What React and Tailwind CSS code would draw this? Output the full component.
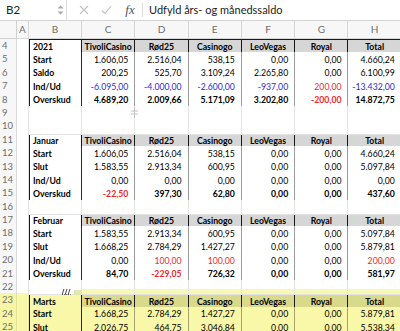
import React from 'react';

const GRID = 'grid grid-cols-[17px_12px_53px_53.3px_53.3px_53.3px_53.3px_53.3px_53.3px]';

const R = (v) => ({ v, c: 'r' });
const B = (v) => ({ v, c: 'b' });

const rows = [
  { n: 4, t: 'head', label: '2021' },
  { n: 5, t: 'body', label: 'Start', vals: ['1.606,05', '2.516,04', '538,15', '0,00', '0,00', '4.660,24'] },
  { n: 6, t: 'body', label: 'Saldo', vals: ['200,25', '525,70', '3.109,24', '2.265,80', '0,00', '6.100,99'] },
  { n: 7, t: 'body', sep: true, label: 'Ind/Ud', vals: [B('-6.095,00'), B('-4.000,00'), B('-2.600,00'), B('-937,00'), R('200,00'), B('-13.432,00')] },
  { n: 8, t: 'last', label: 'Overskud', vals: ['4.689,20', '2.009,66', '5.171,09', '3.202,80', R('-200,00'), '14.872,75'] },
  { n: 9, t: 'empty', cursor: true },
  { n: 10, t: 'empty' },
  { n: 11, t: 'head', label: 'Januar' },
  { n: 12, t: 'body', label: 'Start', vals: ['1.606,05', '2.516,04', '538,15', '0,00', '0,00', '4.660,24'] },
  { n: 13, t: 'body', label: 'Slut', vals: ['1.583,55', '2.913,34', '600,95', '0,00', '0,00', '5.097,84'] },
  { n: 14, t: 'body', sep: true, label: 'Ind/Ud', vals: ['0,00', '0,00', '0,00', '0,00', '0,00', '0,00'] },
  { n: 15, t: 'last', label: 'Overskud', vals: [R('-22,50'), '397,30', '62,80', '0,00', '0,00', '437,60'] },
  { n: 16, t: 'empty' },
  { n: 17, t: 'head', label: 'Februar' },
  { n: 18, t: 'body', label: 'Start', vals: ['1.583,55', '2.913,34', '600,95', '0,00', '0,00', '5.097,84'] },
  { n: 19, t: 'body', label: 'Slut', vals: ['1.668,25', '2.784,29', '1.427,27', '0,00', '0,00', '5.879,81'] },
  { n: 20, t: 'body', sep: true, label: 'Ind/Ud', vals: ['0,00', R('100,00'), R('100,00'), '0,00', '0,00', R('200,00')] },
  { n: 21, t: 'last', label: 'Overskud', vals: ['84,70', R('-229,05'), '726,32', '0,00', '0,00', '581,97'] },
  { n: 22, t: 'empty', mark: true },
  { n: 23, t: 'head', label: 'Marts', y: true },
  { n: 24, t: 'body', label: 'Start', y: true, vals: ['1.668,25', '2.784,29', '1.427,27', '0,00', '0,00', '5.879,81'] },
  { n: 25, t: 'body', label: 'Slut', y: true, vals: ['2.026,75', '464,75', '3.046,84', '0,00', '0,00', '5.538,34'] },
];

const heads = ['TivoliCasino', 'Rød25', 'Casinogo', 'LeoVegas', 'Royal', 'Total'];

function valColor(c) {
  if (c === 'r') return 'text-[#ee2a2a]';
  if (c === 'b') return 'text-[#2b2bd6]';
  return 'text-black';
}

function Row({ r }) {
  const y = r.y;
  const rowHead = (
    <div className={`flex h-full items-center border-r border-b ${y ? 'bg-[#f6f6a4] border-[#e2e29a]' : 'bg-[#f7f7f7] border-[#dcdcdc]'} pl-[2px] text-[9.5px] text-[#6e6e6e]`}>
      {r.n}
    </div>
  );
  const colA = (
    <div className={`h-full border-r border-b ${y ? 'bg-[#f8f8a8] border-[#e8e8a0]' : 'bg-white border-[#e3e3e3]'}`}></div>
  );

  if (r.t === 'empty') {
    return (
      <div className={`${GRID} h-[13.4px]`}>
        {rowHead}
        {colA}
        {[0, 1, 2, 3, 4, 5, 6].map((i) => (
          <div key={i} className="relative h-full border-r border-b border-[#e3e3e3] bg-white">
            {r.mark && i === 0 && (
              <div className="absolute bottom-[-1px] left-[33px] flex h-[6px] items-end">
                <svg width="11" height="6" viewBox="0 0 11 6">
                  <path d="M0 6 L2 0 M3 6 L5 0 M6 6 L8 0" stroke="#333" strokeWidth="0.9" />
                  <path d="M0 5.5 H9" stroke="#333" strokeWidth="0.6" strokeDasharray="1 1" />
                </svg>
                <div className="ml-[1px] h-[5px] w-[9px] bg-[#dfe8b0]"></div>
              </div>
            )}
            {r.mark && i >= 1 && (
              <div className="absolute bottom-0 left-0 right-0 h-[5px] bg-[#f8f8b4]"></div>
            )}
            {r.cursor && i === 2 && (
              <svg className="absolute left-[-5px] top-[1px]" width="9" height="11" viewBox="0 0 9 11">
                <path d="M4.5 0 V11 M1 4 H8 M1 7 H8" stroke="#c2c2c2" strokeWidth="1" />
              </svg>
            )}
          </div>
        ))}
      </div>
    );
  }

  if (r.t === 'head') {
    return (
      <div className={`${GRID} h-[13.4px]`}>
        {rowHead}
        {colA}
        <div className={`flex h-full items-center border-l border-r border-t border-b border-[#1a1a1a] ${y ? 'bg-[#f8f8a8]' : 'bg-white'} pl-[3px] font-bold text-[8.7px] text-black`}>
          {r.label}
        </div>
        {heads.map((h) => (
          <div key={h} className={`flex h-full items-center justify-center border-r border-t border-b border-[#1a1a1a] ${y ? 'bg-[#d9d98c]' : 'bg-[#d6d6d6]'} font-bold text-[8.7px] text-black`}>
            {h}
          </div>
        ))}
      </div>
    );
  }

  const last = r.t === 'last';
  const darkBottom = last || r.sep;
  const bottom = darkBottom ? 'border-b-[#1a1a1a]' : y ? 'border-b-[#e6e69c]' : 'border-b-[#e0e0e0]';
  const bg = y ? 'bg-[#f8f8a8]' : 'bg-white';
  return (
    <div className={`${GRID} h-[13.4px]`}>
      {rowHead}
      {colA}
      <div className={`flex h-full items-center border-l border-r border-b border-l-[#1a1a1a] border-r-[#2a2a2a] ${bottom} ${bg} pl-[3px] font-bold text-[8.7px] text-black`}>
        {r.label}
      </div>
      {r.vals.map((val, i) => {
        const o = typeof val === 'string' ? { v: val, c: '' } : val;
        const rightB = i === 5 ? 'border-r-[#1a1a1a]' : y ? 'border-r-[#a3a36e]' : 'border-r-[#9c9c9c]';
        return (
          <div key={i} className={`flex h-full items-center justify-end border-r border-b ${rightB} ${bottom} ${bg} pr-[6px] text-[8.7px] ${last ? 'font-bold' : ''} ${valColor(o.c)}`}>
            {o.v}
          </div>
        );
      })}
    </div>
  );
}

export default function App() {
  const letters = ['A', 'B', 'C', 'D', 'E', 'F', 'G', 'H'];
  return (
    <div className="h-[331px] w-[400px] overflow-hidden bg-white font-['Lato',sans-serif]">
      {/* formula bar */}
      <div className="flex h-[21px] items-center border-b border-[#d4d4d4] bg-white">
        <div className="w-[54px] pl-[6px] text-[11.5px] text-[#222]">B2</div>
        <div className="flex w-[12px] flex-col items-center justify-center gap-[2px]">
          <svg width="7" height="4" viewBox="0 0 7 4"><path d="M0.5 3.5 L3.5 0.5 L6.5 3.5 Z" fill="#a9a9a9" /></svg>
          <svg width="7" height="4" viewBox="0 0 7 4"><path d="M0.5 0.5 L3.5 3.5 L6.5 0.5 Z" fill="#a9a9a9" /></svg>
        </div>
        <div className="h-[21px] w-px bg-[#dcdcdc]"></div>
        <div className="flex w-[51px] items-center justify-around pl-[6px]">
          <svg width="10" height="10" viewBox="0 0 10 10"><path d="M1 1 L9 9 M9 1 L1 9" stroke="#c4c4c4" strokeWidth="1.2" /></svg>
          <svg width="11" height="10" viewBox="0 0 11 10"><path d="M1 5.5 L4 8.5 L10 1" stroke="#c4c4c4" strokeWidth="1.2" fill="none" /></svg>
        </div>
        <div className="w-[24px] text-center font-['Liberation_Serif',serif] text-[13px] italic text-[#555]">fx</div>
        <div className="h-[14px] w-px bg-[#dcdcdc]"></div>
        <div className="pl-[6px] text-[11px] text-[#222]">Udfyld års- og månedssaldo</div>
      </div>
      {/* column headers */}
      <div className={`${GRID} h-[18px] bg-[#f7f7f7]`}>
        <div className="border-r border-b border-[#d0d0d0]"></div>
        {letters.map((l) => (
          <div key={l} className="flex items-center justify-center border-r border-b border-[#d6d6d6] text-[10px] text-[#6e6e6e]">
            {l}
          </div>
        ))}
      </div>
      {rows.map((r) => (
        <Row key={r.n} r={r} />
      ))}
    </div>
  );
}
